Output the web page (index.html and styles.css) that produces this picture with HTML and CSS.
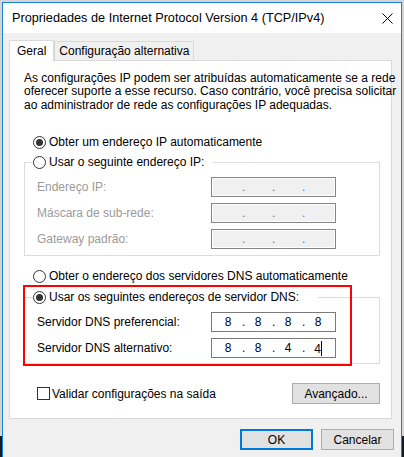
FILE: index.html
```html
<!DOCTYPE html>
<html lang="pt-BR">
<head>
  <meta charset="UTF-8">
  <title>Propriedades de Internet Protocol Version 4 (TCP/IPv4)</title>
  <link rel="stylesheet" href="styles.css">
</head>
<body>
  <div class="window">
    <div class="titlebar">
      <span class="title">Propriedades de Internet Protocol Version 4 (TCP/IPv4)</span>
      <svg class="close" width="11" height="11" viewBox="0 0 11 11">
        <path d="M0.5 0.5 L10.5 10.5 M10.5 0.5 L0.5 10.5" stroke="#000" stroke-width="1" fill="none"/>
      </svg>
    </div>
    <div class="client">
      <div class="tabs">
        <div class="tab active">Geral</div>
        <div class="tab">Configuração alternativa</div>
      </div>
      <div class="panel">
        <p class="intro">As configurações IP podem ser atribuídas automaticamente se a rede<br>oferecer suporte a esse recurso. Caso contrário, você precisa solicitar<br>ao administrador de rede as configurações IP adequadas.</p>

        <div class="option first"><span class="radio checked"></span>Obter um endereço IP automaticamente</div>
        <fieldset class="group">
          <legend class="option ip-legend"><span class="radio"></span>Usar o seguinte endereço IP:</legend>
          <div class="fields disabled">
            <span>Endereço IP:</span>
            <div class="ipbox"><span class="oct"></span><span class="dot">.</span><span class="oct"></span><span class="dot">.</span><span class="oct"></span><span class="dot">.</span><span class="oct"></span></div>
            <span>Máscara de sub-rede:</span>
            <div class="ipbox"><span class="oct"></span><span class="dot">.</span><span class="oct"></span><span class="dot">.</span><span class="oct"></span><span class="dot">.</span><span class="oct"></span></div>
            <span>Gateway padrão:</span>
            <div class="ipbox"><span class="oct"></span><span class="dot">.</span><span class="oct"></span><span class="dot">.</span><span class="oct"></span><span class="dot">.</span><span class="oct"></span></div>
          </div>
        </fieldset>

        <div class="option dns-auto"><span class="radio"></span>Obter o endereço dos servidores DNS automaticamente</div>
        <fieldset class="group dns">
          <legend class="option dns-legend"><span class="radio checked"></span>Usar os seguintes endereços de servidor DNS:</legend>
          <div class="fields">
            <span>Servidor DNS preferencial:</span>
            <div class="ipbox"><span class="oct">8</span><span class="dot">.</span><span class="oct">8</span><span class="dot">.</span><span class="oct">8</span><span class="dot">.</span><span class="oct">8</span></div>
            <span>Servidor DNS alternativo:</span>
            <div class="ipbox"><span class="oct">8</span><span class="dot">.</span><span class="oct">8</span><span class="dot">.</span><span class="oct">4</span><span class="dot">.</span><span class="oct">4<span class="caret"></span></span></div>
          </div>
        </fieldset>

        <div class="panel-footer">
          <div class="check-row"><span class="checkbox"></span>Validar configurações na saída</div>
          <button class="btn advanced">Avançado...</button>
        </div>

        <!-- marcação vermelha sobre o bloco de DNS -->
        <div class="highlight"></div>
      </div>
      <div class="buttons">
        <button class="btn default">OK</button>
        <button class="btn">Cancelar</button>
      </div>
    </div>
  </div>
</body>
</html>
```

FILE: styles.css
```css
/* Base */
* {
  box-sizing: border-box;
}
html, body {
  margin: 0;
  height: 457px;
  overflow: hidden;
}
body {
  font-family: "Segoe UI", "Liberation Sans", Arial, sans-serif;
  font-size: 12px;
  color: #000;
  background: linear-gradient(#d4d4d4 0 436px, #151b27 436px);
}

/* Janela */
.window {
  margin: 2px 0 0 2px;
  width: 400px;
  height: 470px;
  border: 1px solid #1883d7;
  background: #f0f0f0;
}
.titlebar {
  height: 30px;
  background: #fff;
  display: flex;
  align-items: center;
  justify-content: space-between;
  padding: 0 8px 0 9px;
}
.title {
  font-size: 12.7px;
}
.close {
  display: block;
}
.client {
  padding: 7px 7px 0 6px;
}

/* Abas */
.tabs {
  display: flex;
  align-items: flex-end;
  position: relative;
  z-index: 1;
}
.tab {
  border: 1px solid #d9d9d9;
  border-bottom: none;
  height: 19px;
  margin-bottom: 1px;
  padding: 2px 4px 0 4px;
  background: #f0f0f0;
  white-space: nowrap;
}
.tab.active {
  background: #fff;
  height: 22px;
  margin-bottom: -1px;
  padding: 3px 7px 0 7px;
}

/* Painel */
.panel {
  position: relative;
  background: #fff;
  border: 1px solid #d9d9d9;
  margin: -1px 2px 0 0;
  padding: 11px 11px 14px 14px;
}
.intro {
  margin: 0;
  line-height: 13.4px;
  white-space: nowrap;
}
.option {
  display: flex;
  align-items: center;
  height: 16px;
  padding-left: 9px;
  white-space: nowrap;
}
.option.first {
  margin-top: 22px;
}
.option.dns-auto {
  margin-top: 12px;
}
.radio {
  flex-shrink: 0;
  width: 13px;
  height: 13px;
  border: 1px solid #333;
  border-radius: 50%;
  margin-right: 3px;
  display: flex;
  align-items: center;
  justify-content: center;
  background: #fff;
}
.radio.checked::after {
  content: "";
  width: 7px;
  height: 7px;
  border-radius: 50%;
  background: #333;
}

/* Grupos */
.group {
  margin: 4px 0 0 0;
  border: 1px solid #dcdcdc;
  padding: 0 0 6px 0;
  min-width: 0;
}
.group.dns {
  margin-top: 5px;
  padding-bottom: 5px;
}
.group legend {
  margin-left: 8px;
  padding-top: 0;
  padding-bottom: 0;
  padding-left: 0;
  background: #fff;
}
.ip-legend {
  padding-right: 9px;
}
.dns-legend {
  padding-right: 19px;
}
.fields {
  display: grid;
  grid-template-columns: 174px 125px;
  grid-auto-rows: 20px;
  row-gap: 6px;
  align-items: center;
  padding: 7px 0 0 12px;
}
.fields.disabled {
  color: #9a9a9a;
}
.ipbox {
  display: flex;
  align-items: center;
  height: 20px;
  border: 1px solid #7a7a7a;
  background: #fff;
  padding-left: 4px;
}
.disabled .ipbox {
  background: #f0f0f0;
  border-color: #858585;
  box-shadow: inset 0 0 0 1px #fff;
  color: #6d6d8d;
}
.oct {
  width: 24px;
  text-align: center;
}
.dot {
  width: 6px;
  padding-left: 2px;
}
.caret {
  display: inline-block;
  width: 1px;
  height: 15px;
  background: #000;
  vertical-align: -3px;
}

/* Rodapé do painel */
.panel-footer {
  display: flex;
  align-items: center;
  justify-content: space-between;
  margin-top: 19px;
  height: 21px;
}
.check-row {
  display: flex;
  align-items: center;
  padding-left: 13px;
}
.checkbox {
  width: 13px;
  height: 13px;
  border: 1px solid #333;
  background: #fff;
  margin-right: 2px;
}
.btn {
  font: inherit;
  color: #000;
  background: #e1e1e1;
  border: 1px solid #adadad;
  height: 21px;
  width: 73px;
  padding: 0;
}
.btn.advanced {
  width: 88px;
}
.btn.default {
  border: 2px solid #0078d7;
}

/* Marcação vermelha */
.highlight {
  position: absolute;
  left: 13px;
  top: 224px;
  width: 329px;
  height: 81px;
  border: 2px solid #f00;
}

/* Botões da janela */
.buttons {
  display: flex;
  justify-content: flex-end;
  gap: 8px;
  margin-top: 10px;
}
```
